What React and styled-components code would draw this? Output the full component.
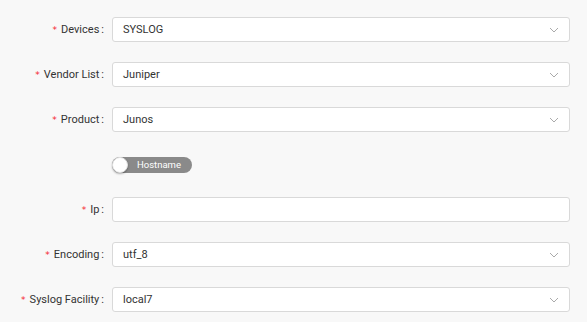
import styled, { createGlobalStyle } from "styled-components";

const GlobalStyle = createGlobalStyle`
  html, body {
    margin: 0;
    padding: 0;
    background: #f8f8f8;
  }
  body {
    font-family: Roboto, "Liberation Sans", Arial, sans-serif;
    font-size: 11px;
    color: #333;
  }
`;

const Form = styled.form`
  display: flex;
  flex-direction: column;
  gap: 20px;
  padding: 17px 17px 0 0;
  width: 587px;
  box-sizing: border-box;
`;

const Row = styled.div`
  display: grid;
  grid-template-columns: 112px 1fr;
  align-items: center;
  height: 25px;
`;

const Label = styled.label`
  display: flex;
  justify-content: flex-end;
  align-items: center;
  padding-right: 8px;
  color: #333;
  font-size: 11px;
  white-space: nowrap;

  &::after {
    content: ":";
    margin-left: 2px;
  }
`;

const Required = styled.span`
  color: #f5222d;
  margin-right: 4px;
  font-size: 9px;
  font-family: SimSun, "DejaVu Sans", sans-serif;
`;

const Box = styled.div`
  display: flex;
  align-items: center;
  justify-content: space-between;
  height: 25px;
  box-sizing: border-box;
  background: #fff;
  border: 1px solid #d9d9d9;
  border-radius: 3px;
  padding: 0 10px 0 10px;
  font-size: 11px;
  color: #333;
`;

const Chevron = () => (
  <svg width="10" height="6" viewBox="0 0 10 6" fill="none">
    <path d="M1 1l4 4 4-4" stroke="#aaa" strokeWidth="1" />
  </svg>
);

const Toggle = styled.div`
  position: relative;
  display: flex;
  align-items: center;
  width: 80px;
  height: 16px;
  border-radius: 8px;
  background: #8a8a8a;
  box-sizing: border-box;
  padding-left: 25px;
  color: #fff;
  font-size: 9.5px;
`;

const Knob = styled.span`
  position: absolute;
  left: 0;
  top: 0;
  width: 16px;
  height: 16px;
  box-sizing: border-box;
  border-radius: 50%;
  background: #fff;
  border: 1px solid #e0e0e0;
  box-shadow: 0 1px 2px rgba(0, 0, 0, 0.3);
`;

function Field({ label, required = true, value, select = true }) {
  return (
    <Row>
      <Label>
        {required && <Required>*</Required>}
        {label}
      </Label>
      <Box>
        <span>{value}</span>
        {select && <Chevron />}
      </Box>
    </Row>
  );
}

export default function App() {
  return (
    <>
      <GlobalStyle />
      <Form>
        <Field label="Devices" value="SYSLOG" />
        <Field label="Vendor List" value="Juniper" />
        <Field label="Product" value="Junos" />
        <Row>
          <span />
          <Toggle>
            <Knob />
            Hostname
          </Toggle>
        </Row>
        <Field label="Ip" value="" select={false} />
        <Field label="Encoding" value="utf_8" />
        <Field label="Syslog Facility" value="local7" />
      </Form>
    </>
  );
}
